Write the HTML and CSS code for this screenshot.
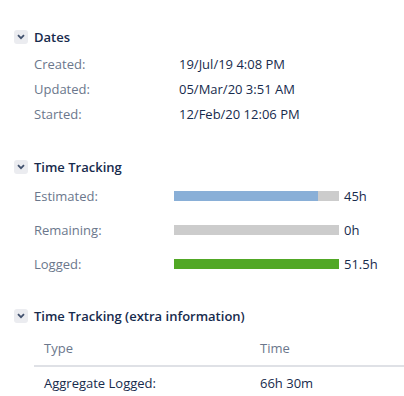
FILE: index.html
```html
<!DOCTYPE html>
<html lang="en">
<head>
  <meta charset="UTF-8">
  <title>Issue details</title>
  <link rel="stylesheet" href="styles.css">
</head>
<body>
  <div class="panel">
    <div class="module">
      <div class="mod-header">
        <span class="toggle"><svg width="8" height="6" viewBox="0 0 8 6"><path d="M1 1.2 L4 4.2 L7 1.2" fill="none" stroke="#42526e" stroke-width="1.8"/></svg></span>
        <h3>Dates</h3>
      </div>
      <dl class="dates">
        <dt>Created:</dt><dd>19/Jul/19 4:08 PM</dd>
        <dt>Updated:</dt><dd>05/Mar/20 3:51 AM</dd>
        <dt>Started:</dt><dd>12/Feb/20 12:06 PM</dd>
      </dl>
    </div>

    <div class="module">
      <div class="mod-header">
        <span class="toggle"><svg width="8" height="6" viewBox="0 0 8 6"><path d="M1 1.2 L4 4.2 L7 1.2" fill="none" stroke="#42526e" stroke-width="1.8"/></svg></span>
        <h3>Time Tracking</h3>
      </div>
      <div class="tracking">
        <div class="tt-row">
          <div class="tt-label">Estimated:</div>
          <div class="tt-bar"><div class="fill estimate" style="width: 87.4%"></div></div>
          <div class="tt-value">45h</div>
        </div>
        <div class="tt-row">
          <div class="tt-label">Remaining:</div>
          <div class="tt-bar"><div class="fill remaining" style="width: 0%"></div></div>
          <div class="tt-value">0h</div>
        </div>
        <div class="tt-row">
          <div class="tt-label">Logged:</div>
          <div class="tt-bar"><div class="fill logged" style="width: 100%"></div></div>
          <div class="tt-value">51.5h</div>
        </div>
      </div>
    </div>

    <div class="module">
      <div class="mod-header">
        <span class="toggle"><svg width="8" height="6" viewBox="0 0 8 6"><path d="M1 1.2 L4 4.2 L7 1.2" fill="none" stroke="#42526e" stroke-width="1.8"/></svg></span>
        <h3>Time Tracking (extra information)</h3>
      </div>
      <table class="extra">
        <thead>
          <tr><th class="col-type">Type</th><th>Time</th></tr>
        </thead>
        <tbody>
          <tr><td>Aggregate Logged:</td><td>66h 30m</td></tr>
        </tbody>
      </table>
    </div>
  </div>
</body>
</html>
```

FILE: styles.css
```css
body {
  margin: 0;
  font-family: "Open Sans", "Noto Sans", sans-serif;
  font-size: 13px;
  line-height: 20px;
  color: #172b4d;
  background: #fff;
}

.panel {
  padding: 27px 0 0 14px;
}

.module {
  margin-bottom: 33px;
}

.module:nth-child(2) {
  margin-bottom: 32px;
}

.module:last-child {
  margin-bottom: 0;
}

.mod-header {
  display: flex;
  align-items: center;
  gap: 6px;
  height: 20px;
}

.toggle {
  width: 14px;
  height: 14px;
  border-radius: 3px;
  background: #ebecf0;
  display: flex;
  align-items: center;
  justify-content: center;
}

.mod-header h3 {
  margin: 0;
  font-size: 13px;
  font-weight: 600;
  color: #172b4d;
}

.dates {
  display: grid;
  grid-template-columns: 145px auto;
  margin: 7px 0 0 20px;
  row-gap: 5px;
}

.dates dt {
  color: #6b778c;
}

.dates dd {
  margin: 0;
}

.tracking {
  margin: 9px 0 0 20px;
  display: flex;
  flex-direction: column;
  gap: 14px;
}

.tt-row {
  display: flex;
  align-items: center;
  height: 20px;
}

.tt-label {
  width: 140px;
  color: #6b778c;
}

.tt-bar {
  width: 165px;
  height: 10px;
  background: #ccc;
}

.fill {
  height: 100%;
}

.estimate {
  background: #89afd7;
}

.logged {
  background: #51a825;
}

.tt-value {
  margin-left: 5px;
}

.extra {
  margin: 12px 0 0 20px;
  border-collapse: collapse;
  table-layout: fixed;
  width: 370px;
}

.extra th {
  text-align: left;
  font-weight: 400;
  color: #6b778c;
  padding: 0 10px 7px;
  border-bottom: 2px solid #dfe1e6;
}

.extra td {
  padding: 6px 10px 0;
}

.extra .col-type {
  width: 196px;
}
```
